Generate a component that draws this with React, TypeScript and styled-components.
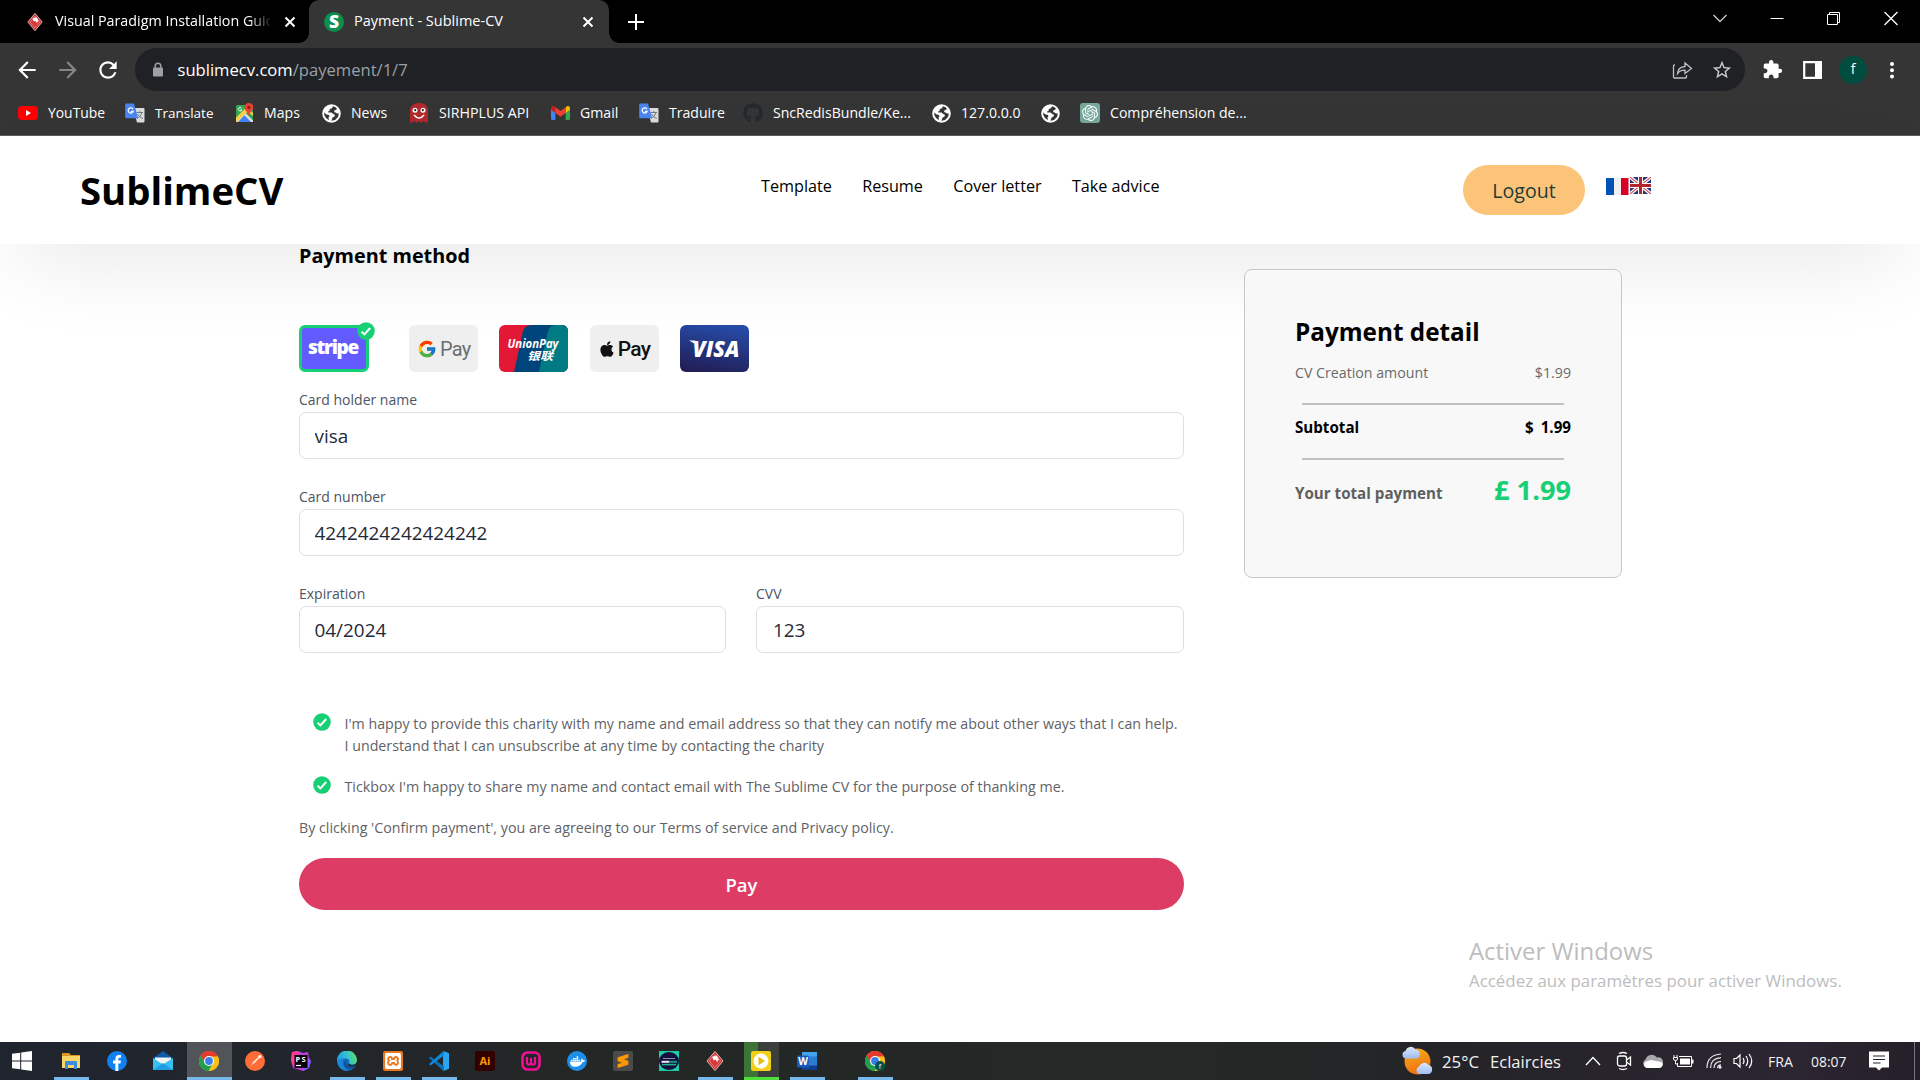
import React from "react";
import styled, { createGlobalStyle, css } from "styled-components";
import {
  MdArrowBack,
  MdArrowForward,
  MdRefresh,
  MdExtension,
  MdStarBorder,
} from "react-icons/md";
import { FaApple, FaDocker, FaGithub } from "react-icons/fa";
import { FcGoogle } from "react-icons/fc";
import { SiOpenai, SiXampp, SiSublimetext } from "react-icons/si";

const FONT = '"Open Sans", "Noto Sans", sans-serif';
const GREEN = "#17cf74";

const GlobalStyle = createGlobalStyle`
  * { box-sizing: border-box; }
  body { margin: 0; background: #fff; font-family: ${FONT}; overflow: hidden; }
  svg { display: block; flex: none; }
`;

const Screen = styled.div`
  position: relative;
  display: flex;
  flex-direction: column;
  width: 1920px;
  height: 1080px;
  overflow: hidden;
`;

/* ---------- Browser chrome ---------- */

const TabStrip = styled.div`
  display: flex;
  height: 43px;
  background: #000;
  color: #fff;
`;

const Tab = styled.div<{ $active?: boolean }>`
  position: relative;
  display: flex;
  align-items: center;
  width: ${(p) => (p.$active ? 300 : 309)}px;
  padding-left: ${(p) => (p.$active ? 15 : 26)}px;
  ${(p) =>
    p.$active &&
    css`
      background: #353535;
      border-radius: 10px 10px 0 0;
      &::before,
      &::after {
        content: "";
        position: absolute;
        bottom: 0;
        width: 10px;
        height: 10px;
      }
      &::before {
        left: -10px;
        background: radial-gradient(circle at 0 0, transparent 9.5px, #353535 10px);
      }
      &::after {
        right: -10px;
        background: radial-gradient(circle at 100% 0, transparent 9.5px, #353535 10px);
      }
    `}
`;

const TabTitle = styled.span<{ $size: number; $fade?: boolean }>`
  width: 215px;
  margin: 0 ${(p) => (p.$fade ? 14 : 13)}px 0 ${(p) => (p.$fade ? 11 : 10)}px;
  padding-bottom: 1px;
  overflow: hidden;
  white-space: nowrap;
  font-size: ${(p) => p.$size}px;
  line-height: 22px;
  ${(p) => p.$fade && "mask-image: linear-gradient(90deg, #000 90%, rgba(0,0,0,.1) 100%);"}
`;

const NewTab = styled.div`
  display: flex;
  align-items: center;
  width: 1103px;
  padding-left: 19px;
`;

const WindowButtons = styled.div`
  display: flex;
  padding-top: 10px;
  gap: 41px;
`;

const Toolbar = styled.div`
  display: flex;
  align-items: center;
  height: 53px;
  background: #353535;
  color: #fff;
`;

const NavIcons = styled.div`
  display: flex;
  align-items: center;
  gap: 14.5px;
  width: 135px;
  padding-left: 14px;
`;

const Omnibox = styled.div`
  display: flex;
  align-items: center;
  width: 1610px;
  height: 43px;
  padding-left: 16.5px;
  border-radius: 22px;
  background: #202124;
  color: #9aa0a6;
`;

const Url = styled.div`
  width: 1491px;
  margin-left: 14px;
  font-size: 16.6px;
  line-height: 24px;
  b {
    font-weight: 400;
    color: #fff;
  }
`;

const ShareIcon = styled.svg`
  margin-right: 14px;
`;

const ToolbarRight = styled.div`
  display: flex;
  align-items: center;
  gap: 20px;
  padding-left: 17px;
`;

const Avatar = styled.div`
  display: grid;
  place-items: center;
  width: 28px;
  height: 28px;
  margin: 0 3px 0 -3px;
  padding-bottom: 2px;
  border-radius: 50%;
  background: #004d40;
  font-size: 14px;
`;

const Bookmarks = styled.div`
  display: flex;
  align-items: center;
  height: 40px;
  padding: 0 0 5px 18px;
  background: #353535;
  border-bottom: 1px solid #5c5c5c;
  color: #fff;
`;

const Bookmark = styled.div<{ $w: number; $size?: number }>`
  display: flex;
  align-items: center;
  gap: 10px;
  width: ${(p) => p.$w}px;
  white-space: nowrap;
  font-size: ${(p) => p.$size ?? 14.1}px;
  line-height: 20px;
`;

/* ---------- Page ---------- */

const Page = styled.div`
  flex: 1;
  background: #fff;
`;

const Header = styled.header`
  display: grid;
  grid-template-columns: 681px 702px 143px auto;
  height: 108px;
  padding-left: 80px;
  background: #fff;
  box-shadow: 0 28px 90px -20px rgba(0, 0, 0, 0.12);
`;

const Logo = styled.div`
  padding-top: 28px;
  color: #000;
  font-size: 38.3px;
  font-weight: 700;
  line-height: 52px;
`;

const Menu = styled.nav`
  display: flex;
  gap: 30.3px;
  padding-top: 38px;
  color: #000;
  font-size: 16.2px;
  line-height: 24px;
  white-space: nowrap;
`;

const Logout = styled.button`
  width: 122px;
  height: 50px;
  margin-top: 29px;
  padding: 2px 0 0;
  border: 0;
  border-radius: 25px;
  background: #fbc478;
  color: #1f3b38;
  font: 500 19.6px/28px ${FONT};
`;

const Flags = styled.div`
  display: flex;
  gap: 1px;
  padding-top: 41px;
`;

const Main = styled.main`
  display: flex;
  align-items: flex-start;
  padding-left: 299px;
`;

const Form = styled.section`
  display: flex;
  flex-direction: column;
  width: 885px;
`;

const Heading = styled.h2`
  margin: 0;
  padding-top: 1px;
  color: #000;
  font-size: 19.8px;
  font-weight: 700;
  line-height: 22px;
`;

const Methods = styled.div`
  display: flex;
  gap: 21.2px;
  height: 47px;
  margin: 58px 0 18px;
`;

const Method = styled.div<{ $bg: string; $selected?: boolean }>`
  position: relative;
  display: flex;
  align-items: center;
  justify-content: center;
  width: ${(p) => (p.$selected ? 70 : 69)}px;
  height: 47px;
  margin-right: ${(p) => (p.$selected ? 19 : 0)}px;
  border: ${(p) => (p.$selected ? `3px solid ${GREEN}` : "0")};
  border-radius: 6px;
  background: ${(p) => p.$bg};
`;

const StripeWord = styled.span`
  padding: 0 2px 3px 0;
  color: #fff;
  font-size: 19px;
  font-weight: 800;
  letter-spacing: -1.3px;
  line-height: 26px;
`;

const PayWord = styled.span<{ $dark?: boolean }>`
  margin-left: ${(p) => (p.$dark ? 2 : 3)}px;
  color: ${(p) => (p.$dark ? "#111" : "#6b6e72")};
  font-family: Roboto, ${FONT};
  font-size: ${(p) => (p.$dark ? 21 : 20)}px;
  font-weight: ${(p) => (p.$dark ? 500 : 400)};
  letter-spacing: -0.7px;
  line-height: 24px;
`;

const Selected = styled.div`
  position: absolute;
  top: -6px;
  right: -9px;
`;

const Fields = styled.div`
  display: grid;
  grid-template-columns: 427px 428px;
  gap: 27px 30px;
`;

const Field = styled.label<{ $wide?: boolean }>`
  display: flex;
  flex-direction: column;
  gap: 2px;
  height: 70px;
  grid-column: ${(p) => (p.$wide ? "1 / -1" : "auto")};
  color: #4b5563;
  font-size: 14px;
  line-height: 20px;
`;

const Input = styled.input<{ $indent?: number }>`
  width: 100%;
  height: 47px;
  padding: 1px 15px 0 ${(p) => p.$indent ?? 14.5}px;
  border: 1px solid #dcdfe6;
  border-radius: 7px;
  outline: 0;
  background: #fff;
  color: #1f2937;
  font: 400 18.9px/26px ${FONT};
`;

const Consents = styled.div`
  display: flex;
  flex-direction: column;
  gap: 19px;
  margin: 59px 0 19px 14px;
`;

const Consent = styled.div`
  display: flex;
  gap: 13.5px;
`;

const Note = styled.p<{ $size?: number }>`
  margin: 0;
  color: #5f6266;
  font-size: ${(p) => p.$size ?? 14.24}px;
  line-height: 22px;
  white-space: nowrap;
`;

const PayButton = styled.button`
  height: 52px;
  margin-top: 19px;
  padding: 2px 0 0;
  border: 0;
  border-radius: 26px;
  background: #dd3c64;
  color: #fff;
  font: 600 18.5px/26px ${FONT};
`;

const Detail = styled.aside`
  width: 378px;
  height: 309px;
  margin: 25px 0 0 60px;
  padding: 45px 50px 0;
  border: 1px solid #c8c8c8;
  border-radius: 8px;
  background: #f8f8f8;
`;

const DetailTitle = styled.h3`
  margin: 0 0 14px;
  color: #000;
  font-size: 24.3px;
  font-weight: 700;
  line-height: 34px;
`;

const DetailRow = styled.div<{ $bold?: boolean; $color: string }>`
  display: flex;
  justify-content: space-between;
  color: ${(p) => p.$color};
  font-size: ${(p) => (p.$bold ? 15.15 : 14.2)}px;
  font-weight: ${(p) => (p.$bold ? 700 : 400)};
  line-height: 20px;
`;

const Amount = styled.span`
  word-spacing: 3px;
`;

const TotalLabel = styled.span`
  padding-top: 12.5px;
`;

const Total = styled.span`
  padding-top: 1px;
  color: ${GREEN};
  font-size: 27.2px;
  line-height: 38px;
`;

const Rule = styled.div<{ $top: number; $bottom: number }>`
  height: 2px;
  margin: ${(p) => `${p.$top}px 7px ${p.$bottom}px`};
  background: #c0c0c0;
`;

const Watermark = styled.div`
  position: absolute;
  left: 1469px;
  top: 935px;
  color: #bdbdbd;
  font-size: 16.9px;
  line-height: 24px;
  white-space: nowrap;
`;

const WatermarkTitle = styled.div`
  margin-bottom: 2px;
  font-size: 23.9px;
  line-height: 32px;
`;

/* ---------- Taskbar ---------- */

const Taskbar = styled.footer`
  display: flex;
  height: 38px;
  background: linear-gradient(90deg, #20242f 0, #22262c 300px, #232725 560px, #242826 1200px, #242428 1450px, #2c2532 1800px, #241f28 1920px);
  color: #f2f2f2;
`;

const Apps = styled.div`
  display: flex;
  width: 1402px;
  padding-left: 4px;
  gap: 11px;
`;

const AppButton = styled.div<{ $state?: "open" | "focus" | "alert"; $gap?: number }>`
  display: flex;
  align-items: center;
  justify-content: center;
  width: 35px;
  height: 38px;
  margin-left: ${(p) => p.$gap ?? 0}px;
  box-shadow: ${(p) =>
    p.$state === "alert"
      ? "inset 0 -3px #4fe03a"
      : p.$state
        ? "inset 0 -3px #76b9ed"
        : "none"};
  ${(p) =>
    p.$state === "focus" &&
    css`
      width: 45px;
      margin: 0 -5px;
      background: #515458;
    `}
  ${(p) =>
    p.$state === "alert" &&
    css`
      background: linear-gradient(90deg, #3d7338 0 14px, #3b403c 14px);
    `}
`;

const Tray = styled.div`
  display: flex;
  align-items: center;
  white-space: nowrap;
`;

const TrayText = styled.span<{ $size: number; $w: number }>`
  width: ${(p) => p.$w}px;
  padding-top: 1px;
  font-size: ${(p) => p.$size}px;
  line-height: 24px;
`;

const Slot = styled.div<{ $w: number }>`
  display: flex;
  align-items: center;
  width: ${(p) => p.$w}px;
  height: 38px;
`;

const DesktopEdge = styled.div`
  width: 1px;
  height: 38px;
  background: #77747b;
`;

/* ---------- Drawings ---------- */

const Check = () => (
  <svg width="18" height="18" viewBox="0 0 18 18">
    <circle cx="9" cy="9" r="8.8" fill={GREEN} />
    <path d="M4.6 9.8 7.4 12.4 13.2 6" fill="none" stroke="#fff" strokeWidth="2" />
  </svg>
);

const Globe = () => (
  <svg width="19" height="19" viewBox="0 0 19 19">
    <circle cx="9.5" cy="9.5" r="9.3" fill="#fff" />
    <path
      d="M11 2.300 10 4.300 7.800 5 7.600 7 6 7.400 6.300 8.400 9.600 8.600 11.200 10 13 10.800 12.400 12.800 10.600 13.600 9.400 16.800 13 16 16 13 16.900 9.500 15 9.600 13.600 8.400 12.400 8.200 12 6.800 14 5.800 15 4.800 13.200 3Z"
      fill="#353535"
    />
    <path d="M2.200 8.400 4.600 10.400 7 11 7.400 12.600 6.400 13.400 7 16.200 4 14 2.300 11Z" fill="#353535" />
  </svg>
);

const Lock = () => (
  <svg width="12" height="15" viewBox="0 0 12 15">
    <path d="M3.200 6V4A2.800 2.800 0 0 1 8.800 4V6" fill="none" stroke="#9aa0a6" strokeWidth="1.500" />
    <rect x="1" y="5.500" width="10" height="9" rx="1" fill="#9aa0a6" />
  </svg>
);

const Diamond = ({ size }: { size: number }) => (
  <svg width={size} height={size} viewBox="0 0 20 20">
    <path d="M10 .4 18 10 10 19.6 2 10Z" fill="#c9302f" stroke="#e9b9b7" strokeWidth="1" />
    <path d="M10 3.2 15.6 10 10 16.8 4.4 10Z" fill="#d53a38" stroke="#f0c4c2" strokeWidth=".5" />
    <path d="M7.2 5.8 11.8 4.6 13.8 8.6 12 11 10.6 8.6 8.6 9.4Z" fill="#fff" />
  </svg>
);

const SublimeIcon = () => (
  <svg width="20" height="20" viewBox="0 0 20 20" overflow="visible">
    <circle cx="10" cy="10" r="10" fill="#0a8f4d" />
    <text x="10" y="16.2" textAnchor="middle" fill="#fff" fontFamily={FONT} fontSize="17.5" fontWeight="800">
      S
    </text>
  </svg>
);

const CloseX = () => (
  <svg width="12" height="12" viewBox="0 0 12 12">
    <path d="M1.5 1.5 10.5 10.5M10.5 1.5 1.5 10.5" stroke="#fff" strokeWidth="2" />
  </svg>
);

const YouTube = () => (
  <svg width="20" height="20" viewBox="0 0 20 20">
    <rect y="3" width="20" height="14" rx="4" fill="#f00" />
    <path d="M8 7v6l5-3Z" fill="#fff" />
  </svg>
);

const Translate = () => (
  <svg width="20" height="20" viewBox="0 0 20 20">
    <path d="M8 5h10.5q1 0 1 1v12.5q0 1-1 1H12Z" fill="#dcdcdc" />
    <path d="M11.5 9.5h6.5M14.7 8v1.5M17 9.6Q15.7 14 11.8 15.5M12.5 11Q14 14 17.8 15.6" fill="none" stroke="#6d7a86" strokeWidth="1" />
    <path d="M1.2.5H9l4.2 14.8H1.2q-1 0-1-1V1.5q0-1 1-1Z" fill="#4a86ee" />
    <path d="M8 6.1A2.6 2.6 0 1 0 8.2 8.3H5.9" fill="none" stroke="#fff" strokeWidth="1.2" />
  </svg>
);

const Maps = () => (
  <svg width="18" height="20" viewBox="0 0 18 20">
    <rect y="2" width="17" height="17" rx="1.5" fill="#34a853" />
    <path d="M0 17.5 8.5 9 17 17.5V19H1.5Q0 19 0 17.5Z" fill="#e5e3df" />
    <path d="M2 19 8.5 12.2 15 19Z" fill="#4285f4" />
    <path d="M0 14.6 10.8 4 17 10v3L12 8.4 0 19.4Z" fill="#fbd04b" />
    <path d="M5.6 5.2A1.8 1.8 0 1 0 5.9 6.8H4.3" fill="none" stroke="#fff" strokeWidth=".9" />
    <path d="M12.9 0a4.4 4.4 0 0 1 4.4 4.4c0 3-3.6 4.2-4.4 8.6-.8-4.4-4.4-5.6-4.4-8.6A4.4 4.4 0 0 1 12.9 0Z" fill="#ea4335" />
    <circle cx="12.9" cy="4.4" r="1.6" fill="#8c2219" />
  </svg>
);

const Ghost = () => (
  <svg width="20" height="20" viewBox="0 0 20 20">
    <path d="M1 19V8Q1 0 10 0T19 8V19Q19 20 16.5 19.6L14.5 18 12.2 20 10 18 7.8 20 5.5 18 3.5 19.6Q1 20 1 19Z" fill="#b2292e" />
    <circle cx="6" cy="7.2" r="2.5" fill="#fff" />
    <circle cx="14" cy="7.2" r="2.5" fill="#fff" />
    <circle cx="6.2" cy="7.2" r="1.1" fill="#222" />
    <circle cx="13.8" cy="7.2" r="1.1" fill="#222" />
    <path d="M5 12Q10 18 15 12" fill="none" stroke="#fff" strokeWidth="1.5" />
  </svg>
);

const Gmail = () => (
  <svg width="19" height="20" viewBox="0 0 19 20">
    <path d="M0 5V15.5Q0 17 1.5 17H4.4V8Z" fill="#4285f4" />
    <path d="M19 5V15.5Q19 17 17.5 17H14.6V8Z" fill="#34a853" />
    <path d="M0 5.2Q0 3 2 3 3 3 4.4 4.3V10L0 6.8Z" fill="#c5221f" />
    <path d="M19 5.2Q19 3 17 3 16 3 14.6 4.3V10L19 6.8Z" fill="#fbbc04" />
    <path d="M4.4 4.3 9.5 8 14.6 4.3V10L9.5 13.8 4.4 10Z" fill="#ea4335" />
  </svg>
);

const ChromeLogo = ({ badge }: { badge?: boolean }) => (
  <svg width="20" height="20" viewBox="0 0 20 20">
    <circle cx="10" cy="10" r="10" fill="#fbc116" />
    <path d="M10 10 1.34 5A10 10 0 0 1 18.66 5Z" fill="#e33b2e" />
    <path d="M10 5.5H18.9A10 10 0 0 0 1.34 5L6.1 12.25Z" fill="#e33b2e" />
    <path d="M6.1 12.25 1.5 4.8A10 10 0 0 0 10 20L13.9 12.25Z" fill="#1fa04e" />
    <path d="M13.9 12.25 9.7 20A10 10 0 0 0 18.9 5.5H10Z" fill="#fbc116" />
    <circle cx="10" cy="10" r="5" fill="#fff" />
    <circle cx="10" cy="10" r="3.9" fill="#3b7ded" />
    {badge && (
      <g>
        <circle cx="15" cy="15" r="5" fill="#04534a" />
        <text x="15" y="17.6" textAnchor="middle" fill="#fff" fontSize="7" fontFamily={FONT}>
          f
        </text>
      </g>
    )}
  </svg>
);

const FrenchFlag = () => (
  <svg width="23" height="18" viewBox="0 0 23 18">
    <path d="M0 1h8v17H0Z" fill="#0052b4" />
    <path d="M8 1h7v17H8Z" fill="#f0f0f0" />
    <path d="M15 1h7.500v17H15Z" fill="#d80027" />
  </svg>
);

const BritishFlag = () => (
  <svg width="21" height="17" viewBox="0 0 21 17">
    <path d="M0 0h21v17H0Z" fill="#29337a" />
    <path d="M0 0 21 17M21 0 0 17" stroke="#fff" strokeWidth="3.6" />
    <path d="M0 0 21 17M21 0 0 17" stroke="#c8505a" strokeWidth="1.1" />
    <path d="M10.500 0V17M0 8.500H21" stroke="#fff" strokeWidth="5" />
    <path d="M10.500 0V17M0 8.500H21" stroke="#b3252d" strokeWidth="3" />
  </svg>
);

const UnionPay = () => (
  <svg width="69" height="47" viewBox="0 0 69 47">
    <defs>
      <clipPath id="up">
        <rect width="69" height="47" rx="6" />
      </clipPath>
    </defs>
    <g clipPath="url(#up)">
      <path d="M0 0H69V47H0Z" fill="#e21836" />
      <path d="M33 0H69V47H15L24 6Q26 0 33 0Z" fill="#00447c" />
      <path d="M57 0H69V47H40L49 6Q51 0 57 0Z" fill="#007b84" />
    </g>
    <text x="8.500" y="22.500" fill="#fff" fontFamily={FONT} fontWeight="700" fontStyle="italic" fontSize="12.500" textLength="51" lengthAdjust="spacingAndGlyphs">
      UnionPay
    </text>
    <text x="28" y="34.500" fill="#fff" fontFamily='"Noto Sans CJK SC", sans-serif' fontWeight="700" fontStyle="italic" fontSize="11" textLength="26" lengthAdjust="spacingAndGlyphs">
      银联
    </text>
  </svg>
);

const Visa = () => (
  <svg width="69" height="47" viewBox="0 0 69 47">
    <defs>
      <linearGradient id="vg" x1=".35" y1="1" x2=".6" y2="0">
        <stop offset="0" stopColor="#221f58" />
        <stop offset="1" stopColor="#264ba6" />
      </linearGradient>
    </defs>
    <rect width="69" height="47" rx="6" fill="url(#vg)" />
    <path d="M9 15.600H15L17 20Z" fill="#fff" />
    <text x="12.500" y="32" fill="#fff" fontFamily={FONT} fontWeight="800" fontStyle="italic" fontSize="22.500" textLength="47" lengthAdjust="spacingAndGlyphs">
      VISA
    </text>
  </svg>
);

const WindowsLogo = () => (
  <svg width="20" height="20" viewBox="0 0 20 20" fill="#fff">
    <path d="M0 2.800 8.200 1.700V9.500H0ZM9.200 1.500 20 0V9.500H9.200ZM0 10.500H8.200V18.300L0 17.200ZM9.200 10.500H20V20L9.200 18.500Z" />
  </svg>
);

const Explorer = () => (
  <svg width="20" height="20" viewBox="0 0 20 20">
    <path d="M1 2H8L10 4H19V8H1Z" fill="#d99a1c" />
    <path d="M1 5H19V17H1Z" fill="#fbd567" />
    <path d="M4 18V11Q4 10 5 10H15Q16 10 16 11V18H13V14H7V18Z" fill="#3a8edb" />
  </svg>
);

const Facebook = () => (
  <svg width="20" height="20" viewBox="0 0 20 20">
    <circle cx="10" cy="10" r="10" fill="#0f82f0" />
    <path d="M8.400 20V12.400H6V9.500H8.400V7.500Q8.400 4 11.900 4H14V6.700H12.600Q11.300 6.700 11.300 8V9.500H14L13.500 12.400H11.300V20Z" fill="#fff" />
  </svg>
);

const Mail = () => (
  <svg width="20" height="20" viewBox="0 0 20 20">
    <path d="M0 7 10 0 20 7V12H0Z" fill="#0f5aa5" />
    <path d="M2 6.500H18V14H2Z" fill="#f1f3f5" />
    <path d="M0 7 10 13.500 20 7V19H0Z" fill="#37c0f0" />
    <path d="M0 19 10 12 20 19Z" fill="#1f9fe0" />
  </svg>
);

const Postman = () => (
  <svg width="20" height="20" viewBox="0 0 20 20">
    <circle cx="10" cy="10" r="10" fill="#ff6c37" />
    <path d="M4.500 15.500 10 9.800 11 10.800Z" fill="#ffe6dc" />
    <path d="M8 12 14.500 6" stroke="#ffe9e0" strokeWidth="1.600" />
    <circle cx="15" cy="5.500" r="1.500" fill="#fff" />
  </svg>
);

const PhpStorm = () => (
  <svg width="20" height="20" viewBox="0 0 20 20">
    <path d="M1 1 7 0 12 2 17 1 18 7 20 10 18 17 12 20 6 18 2 17 0 9Z" fill="#c03be0" />
    <path d="M1 1 7 0 9 9 2 15 0 9Z" fill="#ff3c8e" />
    <path d="M13 17 18 7 20 10 18 17 12 20Z" fill="#7b5cff" />
    <rect x="3.500" y="4" width="13" height="13" fill="#0a0008" />
    <text x="4.600" y="11" fill="#fff" fontFamily={FONT} fontWeight="700" fontSize="7.500" textLength="10">
      PS
    </text>
    <path d="M5 14.500H10" stroke="#fff" strokeWidth="1.200" />
  </svg>
);

const Edge = () => (
  <svg width="20" height="20" viewBox="0 0 20 20">
    <defs>
      <linearGradient id="ed" x1="0" y1=".5" x2="1" y2=".3">
        <stop offset="0" stopColor="#1f9fe8" />
        <stop offset=".55" stopColor="#35c4c8" />
        <stop offset="1" stopColor="#66dd5a" />
      </linearGradient>
    </defs>
    <circle cx="10" cy="10" r="10" fill="#1267b8" />
    <path d="M0 10A10 10 0 0 1 20 9Q20 13.500 15 13.500 11 13.500 12 11 13 8 8.500 7.600 3 7.500 0 10Z" fill="url(#ed)" />
    <path d="M0 10Q3 6.500 7.500 7.500 5 9.500 6 13.500 7.500 18.500 12 19.800 2 21 0 10Z" fill="#1a86d8" />
    <path d="M8.500 9Q8 13.500 12 15 15.500 16 18.500 14.300 15 19 10.500 17.500 5 14.500 8.500 9Z" fill="#124d92" />
    <path d="M12.200 11.500Q12 14 15.500 14 19 13.800 20 10.500V13L18.600 14.800Q14 16.500 11 14Z" fill="#232725" />
  </svg>
);

const Tile = styled.div<{ $bg: string; $color: string; $r?: number }>`
  display: grid;
  place-items: center;
  width: 20px;
  height: 20px;
  border-radius: ${(p) => p.$r ?? 2}px;
  background: ${(p) => p.$bg};
  color: ${(p) => p.$color};
  font-size: 11px;
  font-weight: 700;
  line-height: 16px;
`;

const VsCode = () => (
  <svg width="20" height="20" viewBox="0 0 20 20">
    <path d="M14.500 0 20 2.300V17.700L14.500 20 14 15V5Z" fill="#2aa5f2" />
    <path d="M1.500 5.500 15 15.500V20L14.500 20 0 7Z" fill="#0a72bd" />
    <path d="M14.500 0V5L1.500 14.500 0 13Z" fill="#1288d6" />
  </svg>
);

const Wamp = () => (
  <svg width="20" height="20" viewBox="0 0 20 20" fill="none" stroke="#f20f95">
    <rect x="1.500" y="1.500" width="17" height="17" rx="5" strokeWidth="2.600" />
    <path d="M6 6V11.500Q6 13.500 8 13.500T10 11.500V7V11.500Q10 13.500 12 13.500T14 11.500V6" strokeWidth="2.200" />
  </svg>
);

const Player = () => (
  <svg width="20" height="20" viewBox="0 0 20 20">
    <rect width="20" height="20" rx="2" fill="#f3cf17" />
    <circle cx="10" cy="10" r="7.500" fill="#fff" />
    <path d="M7.500 5.800V14.200L14 10Z" fill="#e8bb10" />
  </svg>
);

const Word = () => (
  <svg width="20" height="20" viewBox="0 0 20 20">
    <rect x="5" y="1" width="15" height="18" rx="1" fill="#2b7cd3" />
    <path d="M5 1H20V5.500H5Z" fill="#41a5ee" />
    <path d="M5 14.500H20V19H5Z" fill="#103f91" />
    <rect y="4.500" width="12" height="12" rx="1" fill="#185abd" />
    <text x="6" y="14" textAnchor="middle" fill="#fff" fontFamily={FONT} fontWeight="700" fontSize="10">
      W
    </text>
  </svg>
);

const Conference = () => (
  <svg width="20" height="20" viewBox="0 0 20 20">
    <path d="M0 0H20V20H0Z" fill="#1fcaa4" />
    <ellipse cx="10" cy="10" rx="10" ry="9" fill="#150f3c" />
    <path d="M4 7.500H16" stroke="#8d8bb0" strokeWidth="1" />
    <path d="M2.500 10.800H10" stroke="#e9e9f2" strokeWidth="2" />
    <path d="M10 10.800H18" stroke="#17967f" strokeWidth="2" />
    <path d="M3 13.600H17" stroke="#20b093" strokeWidth="1.600" />
  </svg>
);

const Weather = () => (
  <svg width="31" height="30" viewBox="0 0 31 30">
    <defs>
      <linearGradient id="sun" x1=".2" y1="0" x2=".5" y2="1">
        <stop offset="0" stopColor="#f6b21b" />
        <stop offset="1" stopColor="#ee6b12" />
      </linearGradient>
      <linearGradient id="cl" x1="0" y1="0" x2="0" y2="1">
        <stop offset="0" stopColor="#dbe8ff" />
        <stop offset="1" stopColor="#9dbcf2" />
      </linearGradient>
    </defs>
    <circle cx="15.500" cy="15.500" r="13" fill="url(#sun)" />
    <path d="M4 12.500A3.800 3.800 0 0 1 3.500 5 5.500 5.500 0 0 1 13.500 3.500 4.600 4.600 0 0 1 14.500 12.500Z" fill="url(#cl)" />
    <path d="M17 28A4 4 0 0 1 17 20.500 5.500 5.500 0 0 1 26.500 19 4.600 4.600 0 0 1 26.500 28Z" fill="url(#cl)" />
  </svg>
);

const line = { fill: "none", stroke: "#fff", strokeWidth: 1.3 } as const;

const bookmarks: { icon: React.ReactNode; label?: string; w: number; size?: number }[] = [
  { icon: <YouTube />, label: "YouTube", w: 107, size: 13.9 },
  { icon: <Translate />, label: "Translate", w: 111, size: 13.5 },
  { icon: <Maps />, label: "Maps", w: 86 },
  { icon: <Globe />, label: "News", w: 87 },
  { icon: <Ghost />, label: "SIRHPLUS API", w: 142, size: 14.2 },
  { icon: <Gmail />, label: "Gmail", w: 88 },
  { icon: <Translate />, label: "Traduire", w: 104 },
  { icon: <FaGithub size={20} color="#24292e" />, label: "SncRedisBundle/Ke...", w: 189 },
  { icon: <Globe />, label: "127.0.0.0", w: 109 },
  { icon: <Globe />, w: 39 },
  {
    icon: (
      <Tile $bg="#75a99b" $color="#fff" $r={3}>
        <SiOpenai size={16} />
      </Tile>
    ),
    label: "Compréhension de...",
    w: 180,
  },
];

export default function App() {
  return (
    <Screen>
      <GlobalStyle />
      <TabStrip>
        <Tab>
          <Diamond size={18} />
          <TabTitle $size={14.3} $fade>
            Visual Paradigm Installation Guid
          </TabTitle>
          <CloseX />
        </Tab>
        <Tab $active>
          <SublimeIcon />
          <TabTitle $size={14.5}>Payment - Sublime-CV</TabTitle>
          <CloseX />
        </Tab>
        <NewTab>
          <svg width="16" height="16" viewBox="0 0 16 16">
            <path d="M8 0V16M0 8H16" stroke="#fff" strokeWidth="2" />
          </svg>
        </NewTab>
        <WindowButtons>
          <svg width="16" height="17" viewBox="0 0 16 17">
            <path d="M1.500 5 8 11.500 14.500 5" {...line} stroke="#ccc" />
          </svg>
          <svg width="16" height="17" viewBox="0 0 16 17">
            <path d="M1.500 8.500H14.500" {...line} strokeWidth={1} />
          </svg>
          <svg width="16" height="17" viewBox="0 0 16 17">
            <path d="M1.500 4.500H11.500V14.500H1.500ZM3.500 4.500V2.500H13.500V12.500H11.500" {...line} strokeWidth={1} />
          </svg>
          <svg width="16" height="17" viewBox="0 0 16 17">
            <path d="M1.500 2 14.500 15M14.500 2 1.500 15" {...line} />
          </svg>
        </WindowButtons>
      </TabStrip>

      <Toolbar>
        <NavIcons>
          <MdArrowBack size={26} />
          <MdArrowForward size={26} color="#868686" />
          <MdRefresh size={26} />
        </NavIcons>
        <Omnibox>
          <Lock />
          <Url>
            <b>sublimecv.com</b>/payement/1/7
          </Url>
          <ShareIcon width="28" height="20" viewBox="0 0 28 20" fill="none" stroke="#bdc1c6" strokeWidth="1.300">
            <path d="M6 5H5.500Q4.500 5 4.500 6V17Q4.500 18 5.500 18H16.500Q17.500 18 17.500 17V15" />
            <path d="M8.500 13.500Q9 7 16 6.500V3L22.500 8.500 16 13.500V10.200Q11 10 8.500 13.500Z" />
          </ShareIcon>
          <MdStarBorder size={22} color="#c6c9cd" />
        </Omnibox>
        <ToolbarRight>
          <MdExtension size={21} />
          <svg width="19" height="18" viewBox="0 0 19 18">
            <path d="M1.200 1.200H17.800V16.800H1.200Z" fill="none" stroke="#fff" strokeWidth="2.200" />
            <path d="M12 0H19V18H12Z" fill="#fff" />
          </svg>
          <Avatar>f</Avatar>
          <svg width="4" height="18" viewBox="0 0 4 18" fill="#fff">
            <circle cx="2" cy="3" r="2" />
            <circle cx="2" cy="9.200" r="2" />
            <circle cx="2" cy="15.400" r="2" />
          </svg>
        </ToolbarRight>
      </Toolbar>

      <Bookmarks>
        {bookmarks.map((b, i) => (
          <Bookmark key={i} $w={b.w} $size={b.size}>
            {b.icon}
            {b.label}
          </Bookmark>
        ))}
      </Bookmarks>

      <Page>
        <Header>
          <Logo>SublimeCV</Logo>
          <Menu>
            <span>Template</span>
            <span>Resume</span>
            <span>Cover letter</span>
            <span>Take advice</span>
          </Menu>
          <Logout>Logout</Logout>
          <Flags>
            <FrenchFlag />
            <BritishFlag />
          </Flags>
        </Header>

        <Main>
          <Form>
            <Heading>Payment method</Heading>
            <Methods>
              <Method $bg="#635bff" $selected>
                <StripeWord>stripe</StripeWord>
                <Selected>
                  <Check />
                </Selected>
              </Method>
              <Method $bg="#efefef">
                <FcGoogle size={20} />
                <PayWord>Pay</PayWord>
              </Method>
              <Method $bg="none">
                <UnionPay />
              </Method>
              <Method $bg="#efefef">
                <FaApple size={18} color="#111" />
                <PayWord $dark>Pay</PayWord>
              </Method>
              <Method $bg="none">
                <Visa />
              </Method>
            </Methods>
            <Fields>
              <Field $wide>
                Card holder name
                <Input defaultValue="visa" />
              </Field>
              <Field $wide>
                Card number
                <Input defaultValue="4242424242424242" />
              </Field>
              <Field>
                Expiration
                <Input defaultValue="04/2024" />
              </Field>
              <Field>
                CVV
                <Input defaultValue="123" $indent={16} />
              </Field>
            </Fields>
            <Consents>
              <Consent>
                <Check />
                <Note>
                  I'm happy to provide this charity with my name and email address so that they can notify me about other
                  ways that I can help.
                  <br />I understand that I can unsubscribe at any time by contacting the charity
                </Note>
              </Consent>
              <Consent>
                <Check />
                <Note $size={14.28}>
                  Tickbox I'm happy to share my name and contact email with The Sublime CV for the purpose of thanking
                  me.
                </Note>
              </Consent>
            </Consents>
            <Note>
              By clicking 'Confirm payment', you are agreeing to our Terms of service and Privacy policy.
            </Note>
            <PayButton>Pay</PayButton>
          </Form>

          <Detail>
            <DetailTitle>Payment detail</DetailTitle>
            <DetailRow $color="#6a6a6a">
              <span>CV Creation amount</span>
              <span>$1.99</span>
            </DetailRow>
            <Rule $top={20} $bottom={12} />
            <DetailRow $bold $color="#000">
              <span>Subtotal</span>
              <Amount>$ 1.99</Amount>
            </DetailRow>
            <Rule $top={21} $bottom={10} />
            <DetailRow $bold $color="#5f5f5f">
              <TotalLabel>Your total payment</TotalLabel>
              <Total>£ 1.99</Total>
            </DetailRow>
          </Detail>
        </Main>
      </Page>

      <Watermark>
        <WatermarkTitle>Activer Windows</WatermarkTitle>
        Accédez aux paramètres pour activer Windows.
      </Watermark>

      <Taskbar>
        <Apps>
          <AppButton><WindowsLogo /></AppButton>
          <AppButton $gap={3.5} $state="open"><Explorer /></AppButton>
          <AppButton><Facebook /></AppButton>
          <AppButton><Mail /></AppButton>
          <AppButton $state="focus"><ChromeLogo /></AppButton>
          <AppButton><Postman /></AppButton>
          <AppButton><PhpStorm /></AppButton>
          <AppButton $state="open"><Edge /></AppButton>
          <AppButton $state="open">
            <Tile $bg="#e8781e" $color="#fff"><SiXampp size={16} /></Tile>
          </AppButton>
          <AppButton $state="open"><VsCode /></AppButton>
          <AppButton>
            <Tile $bg="#330000" $color="#ff9a00">Ai</Tile>
          </AppButton>
          <AppButton><Wamp /></AppButton>
          <AppButton>
            <Tile $bg="#1d8fea" $color="#fff" $r={10}><FaDocker size={15} /></Tile>
          </AppButton>
          <AppButton>
            <Tile $bg="#4b4b4b" $color="#ff9800"><SiSublimetext size={14} /></Tile>
          </AppButton>
          <AppButton><Conference /></AppButton>
          <AppButton $state="open"><Diamond size={20} /></AppButton>
          <AppButton $state="alert"><Player /></AppButton>
          <AppButton $state="open"><Word /></AppButton>
          <AppButton $gap={22} $state="open"><ChromeLogo badge /></AppButton>
        </Apps>
        <Tray>
          <Slot $w={40}><Weather /></Slot>
          <TrayText $size={16.8} $w={48}>25°C</TrayText>
          <TrayText $size={16.6} $w={95}>Eclaircies</TrayText>
          <Slot $w={31}>
            <svg width="16" height="10" viewBox="0 0 16 10"><path d="M1 9 8 1.500 15 9" {...line} /></svg>
          </Slot>
          <Slot $w={27}>
            <svg width="16" height="20" viewBox="0 0 16 20" {...line}>
              <path d="M3 2.500Q7 .5 11 2.500M3 17.500Q7 19.500 11 17.500" />
              <rect x="1.500" y="5" width="9" height="10" rx="2" />
              <path d="M10.500 9 14.500 6V14L10.500 11" />
            </svg>
          </Slot>
          <Slot $w={30}>
            <svg width="20" height="14" viewBox="0 0 20 14">
              <path d="M3 13A4 4 0 0 1 2.500 5.500 6.500 6.500 0 0 1 14 3.500 5 5 0 0 1 17 13Z" fill="#a9a9ab" />
              <path d="M3.500 14A3.500 3.500 0 0 1 3 7.500L8 6 18 8A3.200 3.200 0 0 1 17 14Z" fill="#fff" />
            </svg>
          </Slot>
          <Slot $w={33}>
            <svg width="21" height="14" viewBox="0 0 21 14">
              <path d="M1 1V3M4 1V3M.500 3.500H4.500V5Q4.500 6.500 2.500 6.500T.500 5ZM2.500 6.500V10H5" {...line} strokeWidth={1} />
              <path d="M6 2.500H18.500V12.500H4.500V9" {...line} strokeWidth={1} />
              <path d="M7 4.500H17V10.500H7ZM19 5.500H20.500V9.500H19Z" fill="#fff" />
            </svg>
          </Slot>
          <Slot $w={27}>
            <svg width="17" height="16" viewBox="0 0 17 16" fill="none" stroke="#e6e6e6" strokeWidth="1.200">
              <path d="M1 15Q1 2 15 1M4.500 15Q4.500 5.500 15 4.700M8 15Q8.200 9 15 8.400M11.500 15Q11.700 12 15 11.800" />
              <circle cx="14" cy="14.200" r="1" fill="#fff" />
            </svg>
          </Slot>
          <Slot $w={35}>
            <svg width="21" height="18" viewBox="0 0 21 18" {...line} strokeWidth={1.2}>
              <path d="M1 6.500H3.500L7 3V15L3.500 11.500H1ZM10 6Q12 9 10 12M13 4Q16.500 9 13 14M16 2Q21.500 9 16 16" />
            </svg>
          </Slot>
          <TrayText $size={14.2} $w={43}>FRA</TrayText>
          <TrayText $size={13.9} $w={58}>08:07</TrayText>
          <Slot $w={45}>
            <svg width="20" height="20" viewBox="0 0 20 20">
              <path d="M0 .500H20V16.500H13L10 19.500 7 16.500H0Z" fill="#fff" />
              <path d="M4 5H16M4 8.500H16M4 12H11.500" stroke="#29232e" strokeWidth="1.200" />
            </svg>
          </Slot>
          <DesktopEdge />
        </Tray>
      </Taskbar>
    </Screen>
  );
}
